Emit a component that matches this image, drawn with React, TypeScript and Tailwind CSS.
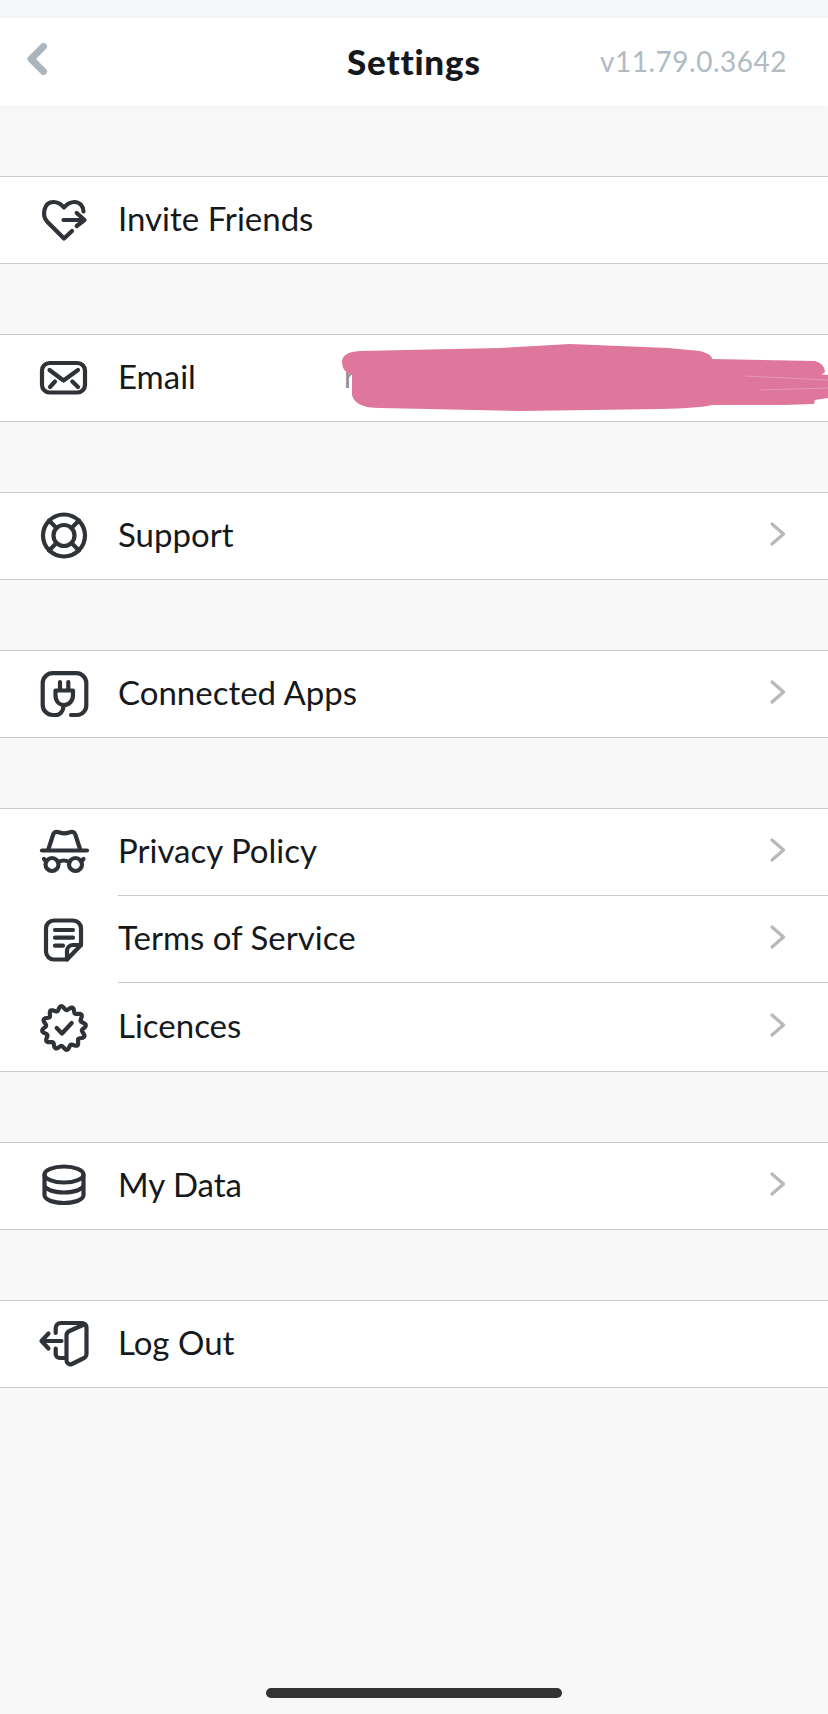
import React from "react";

const badgePath = () => {
  const pts: string[] = [];
  const n = 120;
  for (let i = 0; i < n; i++) {
    const t = (i / n) * Math.PI * 2;
    const r = 20 + 2 * Math.cos(12 * t + Math.PI / 2);
    const x = 23 + r * Math.cos(t);
    const y = 25 + r * Math.sin(t);
    pts.push(`${x.toFixed(2)} ${y.toFixed(2)}`);
  }
  return "M" + pts.join("L") + "Z";
};

const Icon = ({ children }: { children: React.ReactNode }) => (
  <svg
    viewBox="0 0 48 48"
    fill="none"
    stroke="#2f3338"
    strokeWidth="4.2"
    strokeLinecap="round"
    strokeLinejoin="round"
    className="h-12 w-12 shrink-0 overflow-visible"
  >
    {children}
  </svg>
);

const HeartIcon = () => (
  <Icon>
    <path d="M31 35L23 42.5L6.5 26C0.5 20 2.5 6 12.5 6C17 6 20.5 8.5 23 11.5C25.5 8.5 29 6 33.5 6C39 6 42.5 10.5 42.5 15.5" />
    <path d="M22.5 24H43.5M35.7 17L43.5 24L35.7 30" />
  </Icon>
);

const MailIcon = () => (
  <Icon>
    <rect x="1" y="9" width="43" height="29.5" rx="7.5" />
    <path d="M8.5 16L22.5 26.5L37 16M9 33L14 27.5M31.3 27.5L37 33" />
  </Icon>
);

const LifebuoyIcon = () => (
  <Icon>
    <circle cx="23" cy="23.5" r="21" />
    <circle cx="23" cy="23.5" r="10.5" />
    <path d="M15.5 16L8 8.5M30.5 16L38 8.5M15.5 31L8 38.5M30.5 31L38 38.5" />
  </Icon>
);

const PlugIcon = () => (
  <Icon>
    <path d="M30 45H36A9.5 9.5 0 0 0 45.3 35.5V13A10 10 0 0 0 35.3 3.2H11.7A10 10 0 0 0 1.7 13V35A10 10 0 0 0 11.7 45H15C19 45 22.5 41 22.5 36" />
    <path d="M14.5 20.5H32V25C32 31 28 35 23 35C18 35 14.5 31 14.5 25ZM19 12V20M27.3 12V20" />
  </Icon>
);

const SpyIcon = () => (
  <Icon>
    <path d="M1 22.5H46" />
    <path d="M7.5 21L12 7C13 3.5 16 3.5 18.5 4.5C21.5 5.7 25 5.7 28 4.5C31 3.5 33.5 3.5 34.5 7L39 21" />
    <circle cx="11" cy="36.5" r="6.5" />
    <circle cx="34.5" cy="36.5" r="6.5" />
    <path d="M17.5 34C20.5 32 25 32 28 34M5 33.5L3 31M40.5 33.5L42.5 31" />
  </Icon>
);

const NoteIcon = () => (
  <Icon>
    <path d="M26 44.5H13A8 8 0 0 1 5 36.5V13.5A8 8 0 0 1 13 5.5H32A8 8 0 0 1 40 13.5V30Z" />
    <path d="M26 44.5V36A6 6 0 0 1 32 30H40M14 15H32M14 22.7H32M14 30.7H22" />
  </Icon>
);

const BadgeIcon = () => (
  <Icon>
    <path d={badgePath()} />
    <path d="M15.7 25L21 30.5L30.7 20" />
  </Icon>
);

const DataIcon = () => (
  <Icon>
    <ellipse cx="23" cy="12.5" rx="19.5" ry="8" />
    <path d="M3.5 12.5V33C3.5 37.5 12 41 23 41C34 41 42.5 37.5 42.5 33V12.5M3.5 22.5C3.5 27 12 30.5 23 30.5C34 30.5 42.5 27 42.5 22.5" />
  </Icon>
);

const DoorIcon = () => (
  <Icon>
    <path d="M20.5 21H0.5M7.5 13.5L0.5 21L7.5 28.5" />
    <path d="M14.7 13V8A5 5 0 0 1 19.7 3H41A4.5 4.5 0 0 1 45.5 7.5V34A5 5 0 0 1 42 38.5L31 44A4 4 0 0 1 25.5 40V15A5 5 0 0 1 28.5 11L43 4.5" />
    <path d="M14.7 28.5V34A4 4 0 0 0 18.7 38H25" />
  </Icon>
);

const Chevron = () => (
  <svg viewBox="0 0 18 26" fill="none" className="mb-[4px] mr-[41px] h-[26px] w-[18px] shrink-0">
    <path d="M3 3L14.5 13L3 23" stroke="#b6babd" strokeWidth="3.4" strokeLinecap="round" strokeLinejoin="round" />
  </svg>
);

const Row = ({
  icon,
  label,
  arrow = true,
  inset = false,
  height = "h-[86px]",
}: {
  icon: React.ReactNode;
  label: string;
  arrow?: boolean;
  inset?: boolean;
  height?: string;
}) => (
  <div className={"flex items-center pl-[41px] " + height}>
    {icon}
    <div
      className={
        "ml-[29px] flex h-full min-w-0 flex-1 items-center justify-between " +
        (inset ? "border-t border-[#c9c9c9]" : "")
      }
    >
      <span className="mb-[3px] text-[33px] leading-none text-[#16191c]">{label}</span>
      {arrow && <Chevron />}
    </div>
  </div>
);

const Group = ({ children }: { children: React.ReactNode }) => (
  <section className="mt-[70px] border-y border-[#c9c9c9] bg-white">{children}</section>
);

export default function App() {
  return (
    <div className="relative h-[1714px] w-[828px] overflow-hidden bg-[#f8f8f8] font-['Lato',sans-serif]">
      <div className="h-[18px] bg-[#f5f6f7]" />
      <header className="relative flex h-[88px] items-center justify-between bg-white pl-[26px] pr-[41px] shadow-[0_4px_10px_rgba(0,0,0,0.015)]">
        <svg viewBox="0 0 22 32" fill="none" className="mb-[6px] h-8 w-[22px]">
          <path d="M17.5 3.5L5 16L17.5 28.5" stroke="#acb4bc" strokeWidth="7" strokeLinecap="round" strokeLinejoin="round" />
        </svg>
        <h1 className="absolute left-[347px] top-[22px] text-[35px] leading-[42px] font-black tracking-[0.8px] text-[#16191c]">Settings</h1>
        <span className="mb-[2px] text-[28px] leading-none tracking-[0.5px] text-[#b2bac2]">v11.79.0.3642</span>
      </header>

      <Group>
        <Row icon={<HeartIcon />} label="Invite Friends" arrow={false} />
      </Group>
      <Group>
        <div className="relative">
          <Row icon={<MailIcon />} label="Email" arrow={false} />
          <span className="absolute left-[344px] top-[26px] text-[30px] leading-none text-[#8e8e93]">r</span>
        </div>
      </Group>
      <Group>
        <Row icon={<LifebuoyIcon />} label="Support" />
      </Group>
      <Group>
        <Row icon={<PlugIcon />} label="Connected Apps" />
      </Group>
      <Group>
        <Row icon={<SpyIcon />} label="Privacy Policy" height="h-[86px]" />
        <Row icon={<NoteIcon />} label="Terms of Service" inset height="h-[87px]" />
        <Row icon={<BadgeIcon />} label="Licences" inset height="h-[89px]" />
      </Group>
      <Group>
        <Row icon={<DataIcon />} label="My Data" />
      </Group>
      <Group>
        <Row icon={<DoorIcon />} label="Log Out" arrow={false} />
      </Group>

      {/* pink scribble over the address */}
      <svg viewBox="0 0 828 1714" className="pointer-events-none absolute left-0 top-0 h-[1714px] w-[828px]">
        <path
          d="M360 351L500 348L570 344L668 348L700 351Q712 354 712 359L815 361Q825 364 825 372Q823 375 818 374L828 375V398L815 400L814 404L782 405L712 405Q700 408 660 409L520 411L380 408Q355 408 352 395V375Q342 372 342 362Q342 352 360 351Z"
          fill="#df769c"
        />
        <path d="M745 376L828 380M760 390L828 388" stroke="#e896b4" strokeWidth="1" />
      </svg>

      <div className="absolute left-[266px] top-[1688px] h-[10px] w-[296px] rounded-full bg-[#333333]" />
    </div>
  );
}
